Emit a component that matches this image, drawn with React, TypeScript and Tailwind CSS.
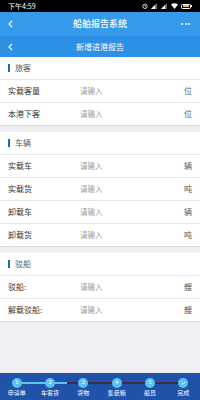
import React from "react";

const FONT = { fontFamily: '"Noto Sans CJK SC", "Noto Sans", sans-serif' };

const sections = [
  {
    title: "旅客",
    rows: [
      { label: "实载客量", unit: "位" },
      { label: "本港下客", unit: "位" },
    ],
  },
  {
    title: "车辆",
    rows: [
      { label: "实载车", unit: "辆" },
      { label: "实载货", unit: "吨" },
      { label: "卸载车", unit: "辆" },
      { label: "卸载货", unit: "吨" },
    ],
  },
  {
    title: "驳船",
    rows: [
      { label: "驳船:", unit: "艘" },
      { label: "解载驳船:", unit: "艘" },
    ],
  },
];

const steps = ["申请单", "车客货", "货物", "集装箱", "船员", "完成"];

function StatusBar() {
  return (
    <div className="flex h-[12px] items-center justify-between bg-black px-[8px]">
      <span className="text-[7px] leading-none text-white">下午4:59</span>
      <div className="flex items-center gap-[3px]">
        {/* alarm */}
        <svg width="6" height="6" viewBox="0 0 6 6">
          <circle cx="3" cy="3.3" r="2.2" fill="none" stroke="#fff" strokeWidth="0.8" />
          <path d="M3 2v1.4h1" stroke="#fff" strokeWidth="0.6" fill="none" />
        </svg>
        {/* signal x2 */}
        {[0, 1].map((i) => (
          <svg key={i} width="7" height="6" viewBox="0 0 7 6">
            <path d="M0 6 L6 0 L6 6 Z" fill="#fff" opacity="0.45" />
            <path d="M0 6 L4 2 L4 6 Z" fill="#fff" />
          </svg>
        ))}
        {/* wifi */}
        <svg width="7" height="6" viewBox="0 0 7 6">
          <path d="M0 1.6 Q3.5 -1 7 1.6 L3.5 6 Z" fill="#fff" />
        </svg>
        {/* battery */}
        <div className="flex items-center">
          <div className="flex h-[5px] w-[10px] items-center rounded-[1.5px] border border-white p-[0.5px]">
            <div className="h-full w-[6px] rounded-[0.5px] bg-[#f3c43a]" />
          </div>
          <div className="h-[2px] w-[1px] bg-white" />
        </div>
      </div>
    </div>
  );
}

function Back() {
  return (
    <svg width="5" height="8" viewBox="0 0 5 8" className="absolute left-[8px]">
      <path d="M4 1 L1 4 L4 7" stroke="#fff" strokeWidth="1.1" fill="none" />
    </svg>
  );
}

export default function App() {
  return (
    <div className="flex h-[400px] w-[200px] flex-col overflow-hidden bg-[#efeff4]" style={FONT}>
      <StatusBar />
      {/* app bar */}
      <div className="relative flex h-[24px] items-center justify-center bg-[#3599ec]">
        <Back />
        <span className="text-[9px] font-medium text-white">船舶报告系统</span>
        <div className="absolute right-[10px] flex gap-[1.5px]">
          <div className="h-[2px] w-[2px] rounded-full bg-white" />
          <div className="h-[2px] w-[2px] rounded-full bg-white" />
          <div className="h-[2px] w-[2px] rounded-full bg-white" />
        </div>
      </div>
      {/* page bar */}
      <div className="relative flex h-[21px] items-center justify-center bg-[#2c90e4]">
        <Back />
        <span className="text-[8px] text-white">新增进港报告</span>
      </div>

      {sections.map((s, si) => (
        <div key={s.title} className={si > 0 ? "mt-[6px] bg-white" : "bg-white"}>
          <div className="flex h-[23px] items-center border-b border-[#e6e6e6] px-[8px]">
            <div className="mr-[5px] h-[8px] w-[2px] bg-[#1c6fa6]" />
            <span className="text-[8px] text-[#555]">{s.title}</span>
          </div>
          {s.rows.map((r, ri) => (
            <div
              key={r.label}
              className={
                "flex h-[23px] items-center px-[8px] " +
                (ri < s.rows.length - 1 ? "border-b border-[#e6e6e6]" : "border-b border-[#dcdcdc]")
              }
            >
              <span className="w-[72px] text-[8px] text-[#333]">{r.label}</span>
              <span className="flex-1 text-[7.5px] text-[#9a9a9a]">请输入</span>
              <span className="text-[8px] text-[#555]">{r.unit}</span>
            </div>
          ))}
        </div>
      ))}

      <div className="flex-1" />

      {/* step bar */}
      <div className="relative h-[27px] bg-[#2152a9]">
        <div className="absolute left-[17px] top-[9px] h-[1.5px] w-[50px] bg-[#5fc3f2]" />
        <div className="absolute left-[67px] top-[9px] h-[1.5px] w-[116px] bg-[#3f2d45]" />
        <div className="relative grid h-full grid-cols-6">
          {steps.map((label, i) => (
            <div key={label} className="flex flex-col items-center pt-[4.5px]">
              <div className="flex h-[10px] w-[10px] items-center justify-center rounded-full bg-[#5cc1f1] text-[5.5px] leading-none text-white">
                {i === 5 ? (
                  <svg width="5" height="4" viewBox="0 0 5 4">
                    <path d="M0.5 2 L2 3.3 L4.5 0.6" stroke="#fff" strokeWidth="0.8" fill="none" />
                  </svg>
                ) : (
                  i + 1
                )}
              </div>
              <span className="mt-[2px] text-[6px] leading-none text-white">{label}</span>
            </div>
          ))}
        </div>
      </div>
    </div>
  );
}
